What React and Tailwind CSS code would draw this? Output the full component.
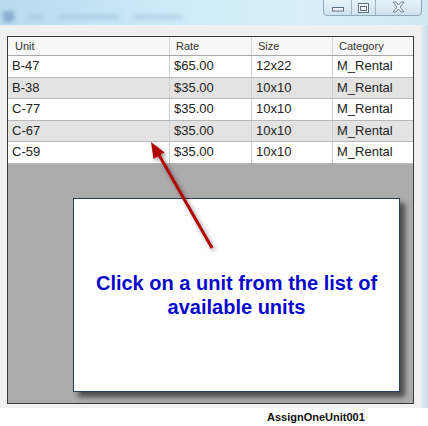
import React from "react";

const rows = [
  ["B-47", "$65.00", "12x22", "M_Rental"],
  ["B-38", "$35.00", "10x10", "M_Rental"],
  ["C-77", "$35.00", "10x10", "M_Rental"],
  ["C-67", "$35.00", "10x10", "M_Rental"],
  ["C-59", "$35.00", "10x10", "M_Rental"],
];

function TitleButtons() {
  return (
    <div className="mr-[6px] mt-[-2px] flex h-[18px] w-[99px] rounded-b-[4px] border border-[#8fa9b8] bg-[linear-gradient(#e8f3f9,#cfe3ee)]">
      <div className="flex w-[28px] items-end justify-center border-r border-[#9fb5c2] pb-[3px]">
        <svg width="12" height="5" viewBox="0 0 12 5">
          <rect x="0.5" y="0.5" width="11" height="3.5" fill="#f4f8fa" stroke="#5f7180" />
        </svg>
      </div>
      <div className="flex w-[24px] items-center justify-center border-r border-[#9fb5c2] pt-[1px]">
        <svg width="11" height="10" viewBox="0 0 11 10">
          <rect x="0.5" y="0.5" width="10" height="9" fill="#f4f8fa" stroke="#5f7180" />
          <rect x="2.5" y="3.5" width="6" height="4" fill="none" stroke="#5f7180" />
        </svg>
      </div>
      <div className="flex flex-1 items-center justify-center">
        <svg width="13" height="12" viewBox="0 0 13 12">
          <path
            d="M1 1 L4 1 L6.5 4 L9 1 L12 1 L8 6 L12 11 L9 11 L6.5 8 L4 11 L1 11 L5 6 Z"
            fill="#eef4f7"
            stroke="#6a7a86"
            strokeWidth="0.9"
            strokeLinejoin="round"
          />
        </svg>
      </div>
    </div>
  );
}

export default function App() {
  const cols = ["w-[162px]", "w-[82px]", "w-[81px]", "flex-1"];
  return (
    <div className="relative h-[426px] w-[428px] overflow-hidden bg-white font-['Liberation_Sans',Arial,sans-serif]">
      {/* title bar */}
      <div className="flex h-[25px] items-start justify-between bg-[linear-gradient(90deg,#b7dbee,#cdeaf7_40%,#d9f0fa_70%,#cfe7f3)]">
        <div className="flex items-center gap-[14px] pl-[3px] pt-[11px] blur-[2px]">
          <div className="h-[11px] w-[11px] rounded-[2px] bg-[#86aecd]" />
          <div className="h-[4px] w-[16px] bg-[#a6c8de]" />
          <div className="h-[4px] w-[60px] bg-[#abcce1]" />
          <div className="h-[4px] w-[50px] bg-[#b0cfe3]" />
        </div>
        <TitleButtons />
      </div>

      {/* body */}
      <div className="flex h-[383px]">
        <div className="flex-1 bg-[#f0f0f0] px-[7px] pb-[4px] pt-[11px]">
          <div className="h-full border border-[#3a3a3a] bg-[#ababab]">
            <div className="flex h-[19px] border-b border-[#a8a8a8] bg-[#f7f7f7] text-[11px] leading-[18px] text-[#333]">
              {["Unit", "Rate", "Size", "Category"].map((h, i) => (
                <div
                  key={h}
                  className={`${cols[i]} ${i < 3 ? "border-r border-[#d4d4d4]" : ""} ${i === 0 ? "pl-[7px]" : "pl-[6px]"}`}
                >
                  {h}
                </div>
              ))}
            </div>
            {rows.map((r, ri) => (
              <div
                key={r[0]}
                className={`flex h-[21.6px] border-b border-[#b8b8b8] text-[13px] leading-[20px] text-[#222] ${
                  ri % 2 === 1 ? "bg-[#e3e3e3]" : "bg-white"
                }`}
              >
                {r.map((c, i) => (
                  <div
                    key={i}
                    className={`${cols[i]} ${i < 3 ? "border-r border-[#d0d0d0]" : ""} pl-[4px]`}
                  >
                    {c}
                  </div>
                ))}
              </div>
            ))}
          </div>
        </div>
        <div className="w-[7px] bg-[linear-gradient(90deg,#e4eef3,#c6dbe7)]" />
      </div>

      {/* caption */}
      <div className="pl-[267px] pt-[3px] text-[11px] font-bold leading-[13px] text-[#111]">
        AssignOneUnit001
      </div>

      {/* callout box */}
      <div className="absolute left-[73px] top-[198px] flex h-[194px] w-[327px] flex-col items-center justify-center border border-[#2c3e5c] bg-white text-center text-[20px] font-bold leading-[24px] text-[#0808cc] shadow-[5px_5px_5px_rgba(0,0,0,0.55)]">
        <span>Click on a unit from the list of</span>
        <span>available units</span>
      </div>

      {/* arrow */}
      <svg
        className="pointer-events-none absolute left-0 top-0 drop-shadow-[2px_2px_2px_rgba(0,0,0,0.4)]"
        width="428"
        height="426"
      >
        <line x1="212" y1="248" x2="159" y2="155" stroke="#b20000" strokeWidth="3" />
        <polygon points="151,142 164.5,152.5 153.5,159" fill="#b20000" />
      </svg>
    </div>
  );
}
